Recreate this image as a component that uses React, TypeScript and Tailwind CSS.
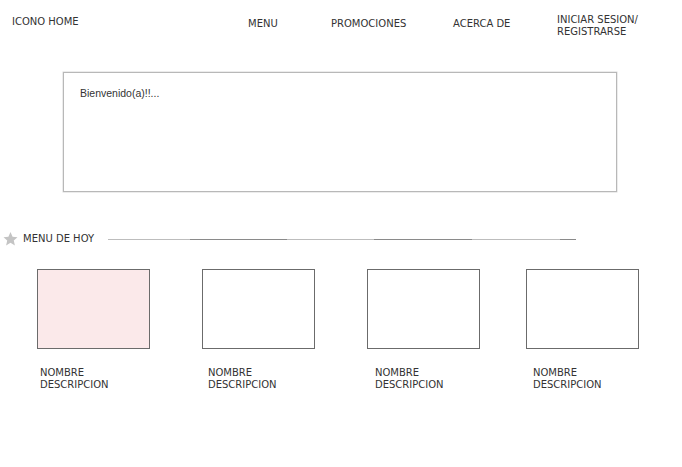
import React from "react";

const font = { fontFamily: '"DejaVu Sans", sans-serif' };

const cards = [
  { fill: "bg-[#fbe9ea]", text: "pl-[3px]", gap: "" },
  { fill: "bg-white", text: "pl-[6px]", gap: "ml-[52px]" },
  { fill: "bg-white", text: "pl-[8px]", gap: "ml-[52px]" },
  { fill: "bg-white", text: "pl-[7px]", gap: "ml-[46px]" },
];

export default function App() {
  return (
    <div
      className="w-[682px] h-[467px] bg-white text-[#333] text-[10px] leading-[12px] overflow-hidden"
      style={font}
    >
      {/* header */}
      <header className="flex h-[46px]">
        <div className="pl-[12px] pt-[16px] w-[248px]">ICONO HOME</div>
        <nav className="flex pt-[18px]">
          <a className="w-[83px]">MENU</a>
          <a className="w-[122px]">PROMOCIONES</a>
          <a className="w-[104px]">ACERCA DE</a>
          <a className="-mt-[4px] w-[100px]">
            INICIAR SESION/
            <br />
            REGISTRARSE
          </a>
        </nav>
      </header>

      {/* welcome box */}
      <section className="ml-[63px] mt-[26px] w-[554px] h-[120px] border border-[#b8b8b8] shadow-[0_0_0_0.5px_#d8d8d8] pl-[16px] pt-[14px]">
        <p
          className="text-[10.5px] text-[#333]"
          style={{ fontFamily: '"Liberation Sans", Arial, sans-serif' }}
        >
          Bienvenido(a)!!...
        </p>
      </section>

      {/* menu de hoy */}
      <div className="flex items-center mt-[39px] h-[16px]">
        <svg width="17" height="16" viewBox="0 0 24 24" className="ml-[2px]">
          <path
            d="M12 1.5l3.1 7 7.4.7-5.6 5 1.7 7.4L12 17.8l-6.6 3.8 1.7-7.4-5.6-5 7.4-.7z"
            fill="#c4c4c4"
          />
        </svg>
        <span className="ml-[4px] w-[85px]">MENU DE HOY</span>
        <div className="flex w-[468px] h-[1px]">
          <div className="w-[82px] bg-[#bdbdbd]" />
          <div className="w-[97px] bg-[#8a8a8a]" />
          <div className="w-[87px] bg-[#bdbdbd]" />
          <div className="w-[98px] bg-[#8a8a8a]" />
          <div className="w-[88px] bg-[#bdbdbd]" />
          <div className="w-[16px] bg-[#8a8a8a]" />
        </div>
      </div>

      {/* cards */}
      <div className="flex pl-[37px] mt-[22px]">
        {cards.map((c, i) => (
          <div key={i} className={c.gap}>
            <div className={`w-[113px] h-[80px] border border-[#6b6b6b] ${c.fill}`} />
            <div className={`${c.text} mt-[18px]`}>
              NOMBRE
              <br />
              DESCRIPCION
            </div>
          </div>
        ))}
      </div>
    </div>
  );
}
